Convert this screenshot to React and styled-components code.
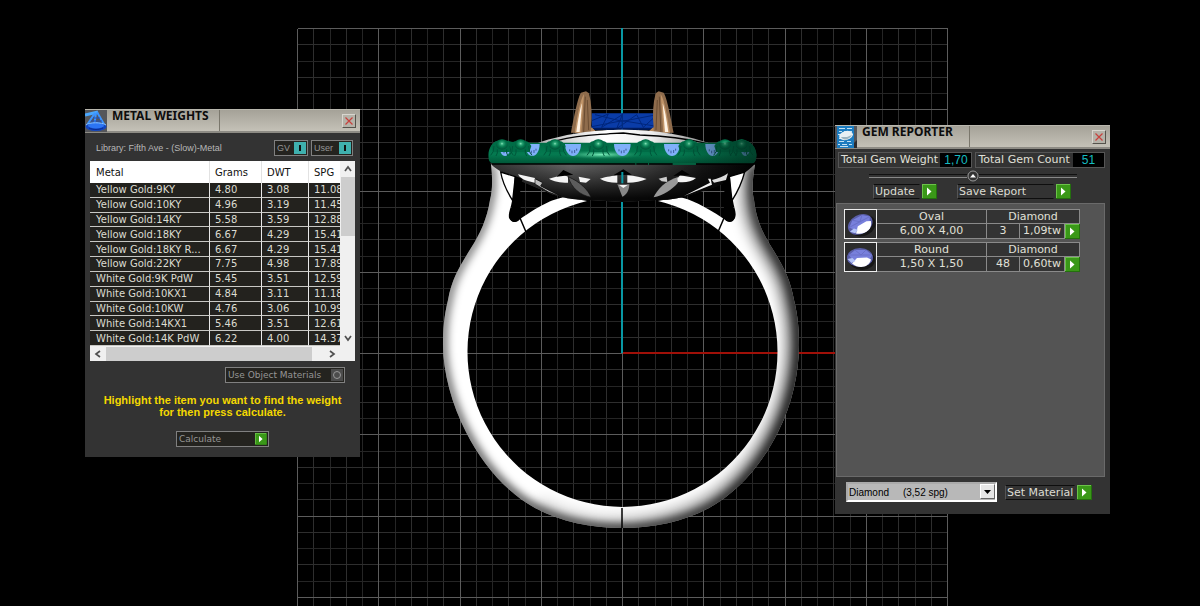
import React from "react";
import styled, { createGlobalStyle, css } from "styled-components";

const GlobalStyle = createGlobalStyle`
  * {
    box-sizing: border-box;
  }
  body {
    margin: 0;
    background: #000;
    font-family: "DejaVu Sans", Verdana, sans-serif;
  }
  button, select {
    font-family: inherit;
    margin: 0;
    padding: 0;
    border-radius: 0;
  }
`;

const Workspace = styled.main`
  position: relative;
  height: 100vh;
  overflow: hidden;
  background: #000;
`;
const Scene = styled.svg`
  display: block;
  width: 100%;
  height: 100%;
`;

/* floating windows */
const Window = styled.section`
  position: absolute;
  top: ${(p) => p.$top}px;
  left: ${(p) => p.$left}px;
  width: 275px;
  background: #333;
  color: #e0e0d8;
`;
const TitleBar = styled.header`
  display: flex;
  align-items: center;
  height: 24px;
  border-top: 1px solid #b9b7ae;
  border-bottom: 2px solid #8d8b84;
  background: linear-gradient(#a5a298, #c4c1b7);
`;
const TitleIcon = styled.div`
  display: flex;
  height: 22px;
  margin-right: 5px;
  background: #55565a;
`;
const Title = styled.h2`
  align-self: flex-start;
  width: 107px;
  margin: 0;
  font-family: "Noto Sans", sans-serif;
  font-size: 12px;
  line-height: 12px;
  font-weight: 700;
  color: #0c0c0c;
  white-space: nowrap;
`;
const TitleRest = styled.div`
  display: flex;
  flex: 1;
  align-self: stretch;
  justify-content: flex-end;
  align-items: center;
  padding-right: 4px;
  border-left: 1px solid #7a776c;
`;
const CloseButton = styled.button`
  display: flex;
  align-items: center;
  justify-content: center;
  width: 14px;
  height: 14px;
  border: 1px solid;
  border-color: #d8d6cf #55534c #55534c #d8d6cf;
  background: #b5b2a8;
`;

/* metal weights */
const MetalBody = styled.div`
  display: flex;
  flex-direction: column;
  align-items: center;
  padding: 7px 5px 10px;
`;
const LibraryRow = styled.div`
  display: flex;
  align-items: center;
  align-self: stretch;
  gap: 3px;
  height: 16px;
  padding: 0 2px 0 6px;
  margin-bottom: 5px;
  font-family: "Liberation Sans", Arial, sans-serif;
  font-size: 9px;
  color: #b8b8b8;
`;
const Library = styled.span`
  flex: 1;
  white-space: nowrap;
`;
const SmallButton = styled.button`
  display: flex;
  justify-content: space-between;
  align-items: center;
  width: ${(p) => p.$width}px;
  height: 16px;
  padding: 1px 1px 1px 2px;
  border: 1px solid #808080;
  background: #24231f;
  color: #959595;
  font-size: 9px;
  line-height: 12px;
  white-space: nowrap;
`;
const Light = styled.span`
  display: flex;
  align-items: center;
  justify-content: center;
  width: 12px;
  height: 12px;
  background: ${(p) => (p.$on ? "#3fb0ae" : "#4c4c4c")};
  &::after {
    content: "";
    ${(p) =>
      p.$on
        ? css`
            width: 2px;
            height: 6px;
            background: #111;
          `
        : css`
            width: 6px;
            height: 6px;
            border: 1px solid #999;
            border-radius: 50%;
          `}
  }
`;
const TableBox = styled.div`
  display: grid;
  grid-template-columns: 1fr 15px;
  grid-template-rows: 185px 15px;
  align-self: stretch;
  background: #f0f0f0;
`;
const TableView = styled.div`
  overflow: hidden;
`;
const Table = styled.table`
  table-layout: fixed;
  width: 300px;
  height: 185px;
  border-collapse: separate;
  border-spacing: 0;
  font-size: 10px;
  line-height: 13px;
  th {
    height: 22px;
    padding: 0 0 0 5px;
    border-right: 1px solid #e2e2e2;
    background: #fff;
    color: #111;
    font-weight: 400;
    text-align: left;
  }
  td {
    height: 14px;
    padding: 0 0 0 5px;
    border-right: 1px solid #e8e8e8;
    border-bottom: 1px solid #c8c8c4;
    background: #23221e;
    color: #dcdcd2;
    white-space: nowrap;
  }
  th:first-child,
  td:first-child {
    padding-left: 6px;
  }
`;
const VScroll = styled.div`
  display: flex;
  flex-direction: column;
  align-items: center;
  padding: 4px 0;
`;
const VThumb = styled.div`
  width: 14px;
  height: 59px;
  margin: 4px 0 auto;
  background: #cdcdcd;
`;
const HScroll = styled.div`
  display: flex;
  grid-column: 1 / 3;
  align-items: center;
  padding: 0 19px 0 4px;
`;
const HThumb = styled.div`
  flex: 1;
  height: 14px;
  margin: 0 16px 0 4px;
  background: #cdcdcd;
`;
const MaterialsRow = styled.div`
  align-self: flex-end;
  margin: 6px 10px 11px 0;
`;
const Hint = styled.p`
  margin: 0 0 13px;
  font-family: "Liberation Sans", Arial, sans-serif;
  font-size: 11px;
  line-height: 12px;
  font-weight: 700;
  color: #f4d800;
  text-align: center;
`;

/* gem reporter */
const GemBody = styled.div`
  padding: 3px 5px 12px 1px;
`;
const Totals = styled.div`
  display: flex;
  gap: 3px;
  padding-left: 2px;
`;
const Total = styled.div`
  display: flex;
  flex: ${(p) => p.$grow};
  height: 16px;
  border: 1px solid #555;
  font-size: 11px;
  line-height: 14px;
  white-space: nowrap;
`;
const TotalLabel = styled.span`
  flex: 1;
  padding-left: 2px;
`;
const TotalValue = styled.output`
  width: 31px;
  background: #000;
  color: #16bcc0;
  font-family: "Liberation Sans", Arial, sans-serif;
  font-size: 12px;
  text-align: center;
`;
const Divider = styled.div`
  display: flex;
  align-items: center;
  height: 14px;
  margin: 1px 28px 1px 33px;
  &::before,
  &::after {
    content: "";
    flex: 1;
    height: 2px;
    border-top: 1px solid #111;
    border-bottom: 1px solid #888;
  }
`;
const Knob = styled.button`
  display: flex;
  width: 12px;
  height: 12px;
  border: 0;
  background: none;
`;
const Actions = styled.div`
  display: flex;
  gap: 20px;
  padding-left: 37px;
  margin-bottom: 4px;
`;
const ActionButton = styled.button`
  display: flex;
  align-items: center;
  gap: 2px;
  border: 0;
  background: none;
  color: #dcdcd2;
  font-size: 11px;
  line-height: 13px;
  text-align: left;
  white-space: nowrap;
`;
const ActionLabel = styled.span`
  width: ${(p) => p.$width}px;
  height: 15px;
  padding-left: 1px;
  border: 1px solid;
  border-color: #0e0e0e #333 #0e0e0e #555;
`;
const GemList = styled.ul`
  display: flex;
  flex-direction: column;
  gap: 3px;
  min-height: 274px;
  margin: 0;
  padding: 5px 0 0 7px;
  border: 1px solid #6a6a6a;
  background: #545454;
  list-style: none;
`;
const GemItem = styled.li`
  display: flex;
  height: 30px;
`;
const Thumb = styled.div`
  width: 33px;
  border: 1px solid #eee;
  background: #2c2c2c;
`;
const GemGrid = styled.div`
  display: grid;
  grid-template-columns: 110px 33px 45px 15px;
  grid-template-rows: 14px 15px;
  border-top: 1px solid #8a8a8a;
  background: #333;
  font-size: 11px;
  line-height: 13px;
  text-align: center;
`;
const Cell = styled.span`
  grid-column: span ${(p) => p.$span || 1};
  border-right: 1px solid #8a8a8a;
  border-bottom: 1px solid #8a8a8a;
  white-space: nowrap;
`;
const RowButton = styled.button`
  display: flex;
  border: 0;
  background: none;
`;
const MaterialBar = styled.div`
  display: flex;
  align-items: center;
  gap: 8px;
  padding: 5px 0 0 10px;
`;
const SelectBox = styled.div`
  display: grid;
  width: 151px;
  height: 20px;
  border: 2px solid;
  border-color: #aaa #fff #fff #aaa;
  background: #b8b8b8;
`;
const Select = styled.select`
  grid-area: 1 / 1;
  appearance: none;
  width: 100%;
  height: 16px;
  padding-left: 1px;
  border: 0;
  background: transparent;
  color: #000;
  font-family: "Liberation Sans", Arial, sans-serif;
  font-size: 10px;
`;
const SelectArrow = styled.span`
  display: flex;
  grid-area: 1 / 1;
  align-items: center;
  justify-content: center;
  justify-self: end;
  width: 15px;
  height: 15px;
  border: 1px solid;
  border-color: #fff #666 #666 #fff;
  background: #e6e6e6;
  pointer-events: none;
`;

const metals = [
  ["Yellow Gold:9KY", "4.80", "3.08", "11.08"],
  ["Yellow Gold:10KY", "4.96", "3.19", "11.45"],
  ["Yellow Gold:14KY", "5.58", "3.59", "12.88"],
  ["Yellow Gold:18KY", "6.67", "4.29", "15.41"],
  ["Yellow Gold:18KY R...", "6.67", "4.29", "15.41"],
  ["Yellow Gold:22KY", "7.75", "4.98", "17.89"],
  ["White Gold:9K PdW", "5.45", "3.51", "12.59"],
  ["White Gold:10KX1", "4.84", "3.11", "11.18"],
  ["White Gold:10KW", "4.76", "3.06", "10.99"],
  ["White Gold:14KX1", "5.46", "3.51", "12.61"],
  ["White Gold:14K PdW", "6.22", "4.00", "14.37"],
];

const gems = [
  { cut: "Oval", size: "6,00 X 4,00", count: 3, weight: "1,09tw", material: "Diamond" },
  { cut: "Round", size: "1,50 X 1,50", count: 48, weight: "0,60tw", material: "Diamond" },
];

const Play = ({ size = 15 }) => (
  <svg width={size} height={size} viewBox="0 0 15 15" aria-hidden="true">
    <rect width="15" height="15" fill="#24700e" />
    <rect width="14" height="14" fill="#6cc24a" />
    <rect x="1" y="1" width="13" height="13" fill="#3a9818" />
    <path d="M5 3.5 9.5 7.5 5 11.5Z" fill="#fff" />
  </svg>
);

const Chevron = ({ d }) => (
  <svg width="8" height="8" viewBox="0 0 8 8" fill="none" stroke="#505050" strokeWidth="1.7" aria-hidden="true">
    <path d={d} />
  </svg>
);

const Close = () => (
  <CloseButton aria-label="Close">
    <svg width="8" height="8" viewBox="0 0 8 8" stroke="#c8403c" strokeWidth="1.2">
      <path d="M.5.5l7 7M7.5.5l-7 7" />
    </svg>
  </CloseButton>
);

const ScaleIcon = () => (
  <svg width="22" height="22" viewBox="0 0 22 22" fill="none" aria-hidden="true">
    <path d="M0 5 13 2" stroke="#4aa8ff" strokeWidth="3" />
    <path d="M10 3 2 15M12 2l8 14M11 3l-2 14" stroke="#3c94ff" strokeWidth="2" />
    <path d="M8 8h7M6 11h11" stroke="#1a50c8" />
    <ellipse cx="11" cy="16.5" rx="10.5" ry="4.5" fill="#1246c0" />
    <ellipse cx="11" cy="15.5" rx="8" ry="3" fill="#2c74f4" />
    <path d="M1 15c3-3 16-3 20 0" stroke="#8cc8ff" />
    <path d="M4 18c4 2 10 2 14 0" stroke="#0a2a90" />
  </svg>
);

const ReportIcon = () => (
  <svg width="22" height="22" viewBox="0 0 22 22" aria-hidden="true">
    <path d="M14 22 22 14V22Z" fill="#2c2c30" />
    <rect x="2" y="0" width="17" height="22" fill="#1c7cc0" />
    <path
      d="M4 2.5h6m2 0h5M4 5.5h3m2 0h8M3 8.5h3m11 0h1M4 12.5h3M4 15.5h5m3 0h4M3 18.500h2m2 0h5m2 0h3M5 20.5h8"
      stroke="#c4e2f4"
    />
    <ellipse cx="11" cy="9.500" rx="7" ry="4.500" transform="rotate(-15 11 9.5)" fill="#e8f0f4" />
    <path d="M6 11c2 4 8 3 11-2l-5 2z" fill="#9cb4c0" />
  </svg>
);

const GemThumb = ({ round }) => (
  <svg width="31" height="28" viewBox="0 0 31 28" aria-hidden="true">
    <g transform={round ? "" : "rotate(-28 15 14)"}>
      <ellipse cx="17" cy="17" rx="13" ry="10" fill="#161616" />
      <ellipse cx="15" cy="14.5" rx="13" ry="9.5" fill="#5a5ea8" />
      <path d="M4 12 10 7l11 0 6 5-3 6H8Z" fill="#7880dc" />
      <path d="M10 7l6 5 5-5M4 12l12 0 11 0" stroke="#6a70c8" fill="none" />
      <path d="M7 20.500 12 15l10-.5 4 2c-2 8-12 10-19 4Z" fill="#fff" />
      <path d="M2.500 16l5-1 3 3-4 2Z" fill="#b4c4f8" />
    </g>
  </svg>
);

const CX = 622.5;
const CY = 353.5;
const CELL = 16.25;
const lines = Array.from({ length: 41 }, (_, i) => i - 20);

const Grid = () => (
  <g fill="none" shapeRendering="crispEdges">
    {[false, true].map((major) =>
      lines
        .filter((i) => (i % 5 === 0) === major)
        .map((i) => (
          <path
            key={i}
            stroke={major ? "#5c5c5c" : i % 2 ? "#2e2e2e" : "#252525"}
            d={`M${CX + i * CELL} ${CY - 325}v650M${CX - 325} ${CY + i * CELL}h650`}
          />
        ))
    )}
    <path d="M623 353H947" stroke="#a01008" strokeWidth="2" />
    <path d="M622 28V353" stroke="#0898a4" strokeWidth="2" />
  </g>
);

const outline =
  "M491 164C493 182 492 192 490 200C487 219 480 234 471 248C460 266 452 278 448 300C444 316 443 330 443 345C443 372 452 405 466 432C482 464 506 492 535 508C562 522 590 528 622 528C654 528 682 522 709 508C738 492 762 464 778 432C792 405 799 372 799 345C799 330 798 316 794 300C790 278 783 266 772 248C763 234 756 219 754 200C752 192 752 182 755 164";

const shank = `${outline}L729 164L733 201C734 208 737 213 735 218C731 224 726 221 724 219C703 205 690 199 679 197L658 201A155 155 0 1 1 587 201L565 197C550 200 541 205 520 219C517 222 512 224 509 218C508 213 511 208 512 201L517 164Z`;

const Shank = () => (
  <g>
    <defs>
      <clipPath id="shankClip">
        <path d={shank} />
      </clipPath>
      <filter id="soft" filterUnits="userSpaceOnUse" x="400" y="120" width="440" height="440">
        <feGaussianBlur stdDeviation="4" />
      </filter>
      <filter id="softer" filterUnits="userSpaceOnUse" x="400" y="120" width="440" height="440">
        <feGaussianBlur stdDeviation="7" />
      </filter>
      <linearGradient id="edge" gradientUnits="userSpaceOnUse" x1="440" y1="300" x2="640" y2="530">
        <stop offset="0" stopColor="#000" stopOpacity=".55" />
        <stop offset="1" stopColor="#000" stopOpacity=".85" />
      </linearGradient>
      <linearGradient id="edgeWide" gradientUnits="userSpaceOnUse" x1="600" y1="0" x2="790" y2="0">
        <stop offset="0" stopColor="#000" stopOpacity=".15" />
        <stop offset="1" stopColor="#000" stopOpacity=".6" />
      </linearGradient>
    </defs>
    <path d={shank} fill="#fff" />
    <g clipPath="url(#shankClip)" fill="none">
      <path d={outline} stroke="url(#edge)" strokeWidth="8" filter="url(#soft)" />
      <path d="M535 508C562 522 590 528 622 528C654 528 682 522 709 508C738 492 762 464 778 432C792 405 799 372 799 345C799 330 798 316 794 300C790 278 783 266 772 248C763 234 756 219 754 200L755 164" stroke="url(#edgeWide)" strokeWidth="24" filter="url(#softer)" />
    </g>
    <g fill="none" stroke="#000" strokeWidth="1.5">
      <path d="M520 218l6 14M724 218l-6 14M622 508v20" />
    </g>
  </g>
);

// The head is drawn on a finer grid, three units to the pixel.
const beads = [66, 122, 225, 355, 497, 627, 735, 785];
const stones = [
  [75, 18],
  [157, 22],
  [279, 24],
  [427, 25],
  [576, 24],
  [698, 22],
  [796, 16],
];

const basket =
  "M30 250H826C800 285 720 320 640 342C600 356 560 362 527 360L427 366 330 360C280 360 240 352 205 338C130 306 60 282 30 250Z";

const Prong = () => (
  <g>
    <path d="M273 158C282 110 294 50 303 38L318 34 327 40C335 70 337 105 333 142L350 156 335 160Z" fill="#8f6c4c" />
    <path d="M284 158C292 110 300 60 312 42L304 158Z" fill="#c09468" />
    <path d="M289 156C295 115 300 85 306 70L299 156Z" fill="#fff3e4" />
    <path d="M311 158L316 50M326 150L322 60" stroke="#6a4c32" strokeWidth="3" fill="none" />
    <path d="M334 142L350 156H332Z" fill="#b5885c" />
  </g>
);

const Head = () => (
  <g transform="translate(480 80) scale(.3333)">
    <defs>
      <linearGradient id="basket" x1="0" y1="0" x2="1" y2="0">
        <stop offset="0" stopColor="#333" />
        <stop offset=".3" stopColor="#666" />
        <stop offset=".55" stopColor="#4a4a4a" />
        <stop offset=".8" stopColor="#161616" />
        <stop offset="1" stopColor="#000" />
      </linearGradient>
      <linearGradient id="shade" x1="0" y1="0" x2="0" y2="1">
        <stop offset="0" stopColor="#000" stopOpacity="0" />
        <stop offset=".9" stopColor="#000" stopOpacity=".9" />
      </linearGradient>
      <linearGradient id="enamel" x1="0" y1="0" x2="0" y2="1">
        <stop offset="0" stopColor="#006a44" />
        <stop offset=".6" stopColor="#047a50" />
        <stop offset="1" stopColor="#005436" />
      </linearGradient>
      <linearGradient id="enamelSide" x1="0" y1="0" x2="1" y2="0">
        <stop offset=".7" stopColor="#002a1c" stopOpacity="0" />
        <stop offset="1" stopColor="#002a1c" stopOpacity=".7" />
      </linearGradient>
      <radialGradient id="shine">
        <stop offset="0" stopColor="#7cf0bc" />
        <stop offset="1" stopColor="#108a5c" stopOpacity="0" />
      </radialGradient>
      <radialGradient id="bead" cx=".5" cy=".4" r=".55">
        <stop offset="0" stopColor="#8ce8bc" />
        <stop offset=".25" stopColor="#2aa474" />
        <stop offset=".6" stopColor="#067a50" />
        <stop offset="1" stopColor="#00583a" />
      </radialGradient>
      <linearGradient id="dome" x1="0" y1="0" x2="1" y2="0">
        <stop offset="0" stopColor="#aaa" />
        <stop offset=".4" stopColor="#fff" />
        <stop offset=".65" stopColor="#eee" />
        <stop offset="1" stopColor="#777" />
      </linearGradient>
    </defs>

    <path d="M335 100H523V148H335Z" fill="#0a3ca8" />
    <path
      d="M335 122L385 102 365 142 427 104 410 146 470 104 490 142 523 112M345 104L427 124 520 106M335 140L427 122 523 138"
      stroke="#00267c"
      strokeWidth="3"
      fill="none"
    />
    <path d="M335 146H523" stroke="#001c60" strokeWidth="6" />
    <path d="M427 100V150" stroke="#002c80" strokeWidth="4" />
    <Prong />
    <g transform="matrix(-1 0 0 1 854 0)">
      <Prong />
    </g>

    <path d="M148 198C250 158 350 149 430 149C520 149 620 162 712 198Z" fill="url(#dome)" />
    <path d="M230 182C310 162 360 165 390 161L430 159 480 165C560 168 620 176 680 190" stroke="#000" strokeWidth="4" fill="none" />

    <path d={basket} fill="url(#basket)" />
    <path d={basket} fill="url(#shade)" />

    {/* open shoulders and the posts that carry the basket */}
    <path d="M62 276L106 290 98 362C78 330 66 300 62 276ZM794 276L748 290 756 362C776 330 788 300 794 276Z" fill="#fff" stroke="#000" strokeWidth="4" />
    <path d="M104 288L128 296C112 340 128 380 120 416C112 430 92 430 89 410L100 360Z" fill="#000" />
    <path d="M750 288L726 296C742 340 726 380 734 416C742 430 762 430 765 410L754 360Z" fill="#000" />

    <g fill="#f4f4f4">
      <path d="M114 283L165 294 172 310C150 305 124 302 114 283Z" />
      <path d="M165 296L188 308 182 318 244 350 205 336 165 312Z" fill="#bbb" stroke="#000" strokeWidth="2" />
      <path d="M207 296L250 284 264 290V308C240 308 220 304 207 296Z" />
      <path d="M296 290L332 297 318 308 300 306Z" />
      <path d="M264 290C300 305 325 330 333 352C300 345 275 325 264 290Z" fill="#5c5c5c" stroke="#111" strokeWidth="2" />
      <path d="M360 296C380 290 400 288 412 286V308C390 308 372 304 360 296Z" />
      <path d="M442 286C465 288 485 292 500 297C485 304 465 308 442 308Z" />
      <path d="M412 312L427 318 448 312C448 330 440 345 427 350Z" fill="#888" />
      <path d="M416 314H444L430 324Z" />
      <path d="M536 296L560 290 562 306 545 304Z" fill="#ccc" />
      <path d="M521 352C530 330 555 302 596 290L594 308C575 330 550 345 521 352Z" fill="#999" />
      <path d="M592 296L600 286 648 294C635 306 615 308 594 306Z" />
      <path d="M612 348L690 308 684 296 692 296 696 314Z" />
      <path d="M696 300C715 296 730 290 744 280L738 300 702 308Z" fill="#ddd" />
    </g>
    <path d="M230 290L250 270 280 284ZM400 286L430 268 456 284ZM580 288L606 270 630 284Z" fill="#000" />
    <path d="M427 276V310" stroke="#0898a4" strokeWidth="6" />

    <path d="M26 236C22 206 36 184 60 180C84 180 100 190 150 188H706C750 190 770 180 792 180C818 186 834 210 828 236C826 246 820 252 808 252H44C32 250 26 244 26 236Z" fill="url(#enamel)" />
    <ellipse cx="365" cy="224" rx="130" ry="14" fill="url(#shine)" />
    {stones.map(([x, r]) => (
      <g key={x}>
        <path d={`M${x - r} 192H${x + r}C${x + r} 214 ${x + r / 2} 228 ${x} 228C${x - r / 2} 228 ${x - r} 214 ${x - r} 192Z`} fill="#80b0fa" />
        <path d={`M${x - 10} 208v6M${x - 3} 212v8M${x + 5} 210v9M${x + 11} 206v6`} stroke="#3c5c9c" strokeWidth="3" />
      </g>
    ))}
    {beads.map((x) => (
      <g key={x}>
        <path d={`M${x - 32} 198Q${x - 24} 184 ${x - 16} 184Q${x} 172 ${x + 16} 184Q${x + 24} 184 ${x + 32} 198L${x + 26} 216H${x - 26}Z`} fill="#006c46" />
        <path
          d={`M${x - 24} 198Q${x - 24} 218 ${x - 34} 226M${x - 14} 208Q${x - 12} 220 ${x - 18} 228M${x + 24} 198Q${x + 24} 218 ${x + 34} 226M${x + 14} 208Q${x + 12} 220 ${x + 18} 228`}
          stroke="#00563a"
          strokeWidth="3"
          fill="none"
        />
        <ellipse cx={x} cy="194" rx="17" ry="15" fill="url(#bead)" />
      </g>
    ))}
    <path d="M26 236C22 206 36 184 60 180C84 180 100 190 150 188H706C750 190 770 180 792 180C818 186 834 210 828 236C826 246 820 252 808 252H44C32 250 26 244 26 236Z" fill="url(#enamelSide)" />
    <path d="M36 252H826" stroke="#000" strokeWidth="5" />
    <path d="M578 252H648M504 252h3M466 252h3" stroke="#067a50" strokeWidth="4" />
  </g>
);

const Toggle = ({ width, on, children }) => (
  <SmallButton $width={width} aria-pressed={!!on}>
    {children}
    <Light $on={on} />
  </SmallButton>
);

const MetalWeights = () => (
  <Window $top={109} $left={85}>
    <TitleBar>
      <TitleIcon>
        <ScaleIcon />
      </TitleIcon>
      <Title>METAL WEIGHTS</Title>
      <TitleRest>
        <Close />
      </TitleRest>
    </TitleBar>
    <MetalBody>
      <LibraryRow>
        <Library>Library: Fifth Ave - (Slow)-Metal</Library>
        <Toggle width={34} on>
          GV
        </Toggle>
        <Toggle width={42} on>
          User
        </Toggle>
      </LibraryRow>
      <TableBox>
        <TableView>
          <Table>
            <colgroup>
              <col width="120" />
              <col width="52" />
              <col width="47" />
              <col />
            </colgroup>
            <thead>
              <tr>
                <th>Metal</th>
                <th>Grams</th>
                <th>DWT</th>
                <th>SPG</th>
              </tr>
            </thead>
            <tbody>
              {metals.map((row) => (
                <tr key={row[0]}>
                  {row.map((value, i) => (
                    <td key={i}>{value}</td>
                  ))}
                </tr>
              ))}
            </tbody>
          </Table>
        </TableView>
        <VScroll>
          <Chevron d="M1 6l3-4 3 4" />
          <VThumb />
          <Chevron d="M1 2l3 4 3-4" />
        </VScroll>
        <HScroll>
          <Chevron d="M6 1L2 4l4 3" />
          <HThumb />
          <Chevron d="M2 1l4 3-4 3" />
        </HScroll>
      </TableBox>
      <MaterialsRow>
        <Toggle width={120}>Use Object Materials</Toggle>
      </MaterialsRow>
      <Hint>
        Highlight the item you want to find the weight
        <br />
        for then press calculate.
      </Hint>
      <SmallButton $width={93}>
        Calculate
        <Play size={12} />
      </SmallButton>
    </MetalBody>
  </Window>
);

const GemReporter = () => (
  <Window $top={125} $left={835}>
    <TitleBar>
      <TitleIcon>
        <ReportIcon />
      </TitleIcon>
      <Title>GEM REPORTER</Title>
      <TitleRest>
        <Close />
      </TitleRest>
    </TitleBar>
    <GemBody>
      <Totals>
        <Total $grow={135}>
          <TotalLabel>Total Gem Weight</TotalLabel>
          <TotalValue>1,70</TotalValue>
        </Total>
        <Total $grow={130}>
          <TotalLabel>Total Gem Count</TotalLabel>
          <TotalValue>51</TotalValue>
        </Total>
      </Totals>
      <Divider>
        <Knob aria-label="Collapse">
          <svg width="12" height="12" viewBox="0 0 12 12">
            <circle cx="6" cy="6" r="5" fill="#333" stroke="#999" />
            <path d="M3 7.5 6 4l3 3.5Z" fill="#fff" />
          </svg>
        </Knob>
      </Divider>
      <Actions>
        <ActionButton>
          <ActionLabel $width={47}>Update</ActionLabel>
          <Play />
        </ActionButton>
        <ActionButton>
          <ActionLabel $width={97}>Save Report</ActionLabel>
          <Play />
        </ActionButton>
      </Actions>
      <GemList>
        {gems.map((gem) => (
          <GemItem key={gem.cut}>
            <Thumb>
              <GemThumb round={gem.cut === "Round"} />
            </Thumb>
            <GemGrid>
              <Cell>{gem.cut}</Cell>
              <Cell $span={3}>{gem.material}</Cell>
              <Cell>{gem.size}</Cell>
              <Cell>{gem.count}</Cell>
              <Cell>{gem.weight}</Cell>
              <RowButton aria-label={`Select ${gem.cut}`}>
                <Play />
              </RowButton>
            </GemGrid>
          </GemItem>
        ))}
      </GemList>
      <MaterialBar>
        <SelectBox>
          <Select aria-label="Material" defaultValue="diamond">
            <option value="diamond">{"Diamond\u00a0\u00a0\u00a0\u00a0\u00a0(3,52 spg)"}</option>
          </Select>
          <SelectArrow>
            <svg width="7" height="4" viewBox="0 0 7 4">
              <path d="M0 0h7L3.5 4Z" />
            </svg>
          </SelectArrow>
        </SelectBox>
        <ActionButton>
          <ActionLabel $width={70}>Set Material</ActionLabel>
          <Play />
        </ActionButton>
      </MaterialBar>
    </GemBody>
  </Window>
);

export default function App() {
  return (
    <>
      <GlobalStyle />
      <Workspace>
        <Scene viewBox="0 0 1200 606" preserveAspectRatio="xMidYMid slice" role="img" aria-label="Ring, front view">
          <Grid />
          <Shank />
          <Head />
        </Scene>
        <MetalWeights />
        <GemReporter />
      </Workspace>
    </>
  );
}
